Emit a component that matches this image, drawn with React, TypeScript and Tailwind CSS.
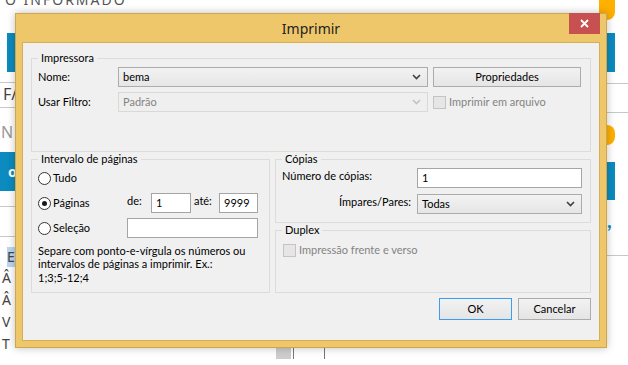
import { ReactNode } from "react";

const Chevron = ({ color = "#404040" }: { color?: string }) => (
  <svg width="9" height="6" viewBox="0 0 9 6" className="shrink-0">
    <path d="M1 1l3.5 3.5L8 1" fill="none" stroke={color} strokeWidth="1.6" />
  </svg>
);

const Group = ({
  title,
  className,
  children,
}: {
  title: string;
  className?: string;
  children: ReactNode;
}) => (
  <fieldset className={`border border-[#dcdcdc] ${className ?? ""}`}>
    <legend className="ml-[6px] px-[3px] leading-[14px] text-black">{title}</legend>
    {children}
  </fieldset>
);

const Radio = ({ checked, label }: { checked?: boolean; label: string }) => (
  <label className="flex items-center gap-[2px]">
    <span className="flex h-[13px] w-[13px] items-center justify-center rounded-full border border-[#333] bg-white">
      {checked && <span className="h-[5px] w-[5px] rounded-full bg-[#1a1a1a]" />}
    </span>
    <span>{label}</span>
  </label>
);

const TextBox = ({ value, className }: { value?: string; className?: string }) => (
  <div
    className={`flex h-[20px] items-center border border-[#a5a5a5] bg-white pl-[4px] ${className ?? ""}`}
  >
    {value}
  </div>
);

const Combo = ({
  value,
  disabled,
  className,
}: {
  value: string;
  disabled?: boolean;
  className?: string;
}) => (
  <div
    className={`flex h-[20px] items-center justify-between border pl-[4px] pr-[6px] ${
      disabled
        ? "border-[#d9d9d9] bg-[#efefef] text-[#838383]"
        : "border-[#acacac] bg-gradient-to-b from-[#f2f2f2] to-[#e6e6e6] text-black"
    } ${className ?? ""}`}
  >
    <span>{value}</span>
    <Chevron color={disabled ? "#c3c3c3" : "#404040"} />
  </div>
);

const Button = ({ label, focused, className }: { label: string; focused?: boolean; className?: string }) => (
  <button
    className={`flex items-center justify-center border bg-gradient-to-b from-[#f2f2f2] to-[#e5e5e5] text-black ${
      focused ? "border-[#3c9cf0]" : "border-[#acacac]"
    } ${className ?? ""}`}
  >
    {label}
  </button>
);

const Dialog = () => (
  <div className="absolute left-[15px] top-[13px] flex h-[335px] w-[592px] flex-col border border-[#d0a64c] bg-[#efc76b] shadow-[0_0_8px_rgba(0,0,0,0.25)]">
    <div className="relative flex h-[28px] shrink-0 items-center justify-center">
      <span className="font-['Noto_Sans',sans-serif] text-[14px] text-[#222]">Imprimir</span>
      <div className="absolute right-[6px] top-[-1px] flex h-[21px] w-[31px] items-center justify-center bg-[#c75050]">
        <svg width="9" height="9" viewBox="0 0 9 9">
          <path d="M1 1l7 7M8 1l-7 7" stroke="#fff" strokeWidth="1.8" />
        </svg>
      </div>
    </div>
    <div className="mx-[6px] mb-[6px] flex flex-1 flex-col border border-[#d6ae55] bg-[#f0f0f0] px-[8px] pt-[8px]">
      <Group title="Impressora" className="h-[101px]">
        <div className="grid grid-cols-[75px_310px_148px] items-center gap-x-[5px] gap-y-[5px] pl-[6px] pt-[2px]">
          <span>Nome:</span>
          <Combo value="bema" />
          <Button label="Propriedades" className="h-[20px]" />
          <span>Usar Filtro:</span>
          <Combo value="Padrão" disabled />
          <label className="flex items-center gap-[3px] text-[#838383]">
            <span className="h-[13px] w-[13px] border border-[#c4c4c4] bg-[#e6e6e6]" />
            Imprimir em arquivo
          </label>
        </div>
      </Group>
      <div className="flex gap-[5px]">
        <Group title="Intervalo de páginas" className="h-[141px] w-[239px]">
          <div className="flex flex-col pl-[6px] pt-[0.5px]">
            <div className="flex h-[24px] items-center">
              <Radio label="Tudo" />
            </div>
            <div className="flex h-[25px] items-center">
              <div className="w-[89px]">
                <Radio checked label="Páginas" />
              </div>
              <span className="mb-[4px] w-[24px]">de:</span>
              <TextBox value="1" className="w-[40px]" />
              <span className="mb-[4px] ml-[3px] w-[25px]">até:</span>
              <TextBox value="9999" className="w-[39px]" />
            </div>
            <div className="flex h-[25px] items-center">
              <div className="w-[89px]">
                <Radio label="Seleção" />
              </div>
              <TextBox className="w-[131px]" />
            </div>
            <p className="mt-[3px] leading-[13.5px]">
              Separe com ponto-e-vírgula os números ou intervalos de páginas a imprimir. Ex.:
              <br />
              1;3;5-12;4
            </p>
          </div>
        </Group>
        <div className="flex w-[316px] flex-col">
          <Group title="Cópias" className="h-[71px]">
            <div className="grid grid-cols-[129px_165px] items-center gap-x-[6px] gap-y-[5px] pl-[6px] pt-[1.5px]">
              <span className="mb-[5px]">Número de cópias:</span>
              <TextBox value="1" />
              <span className="mb-[3px] text-right">Ímpares/Pares:</span>
              <Combo value="Todas" />
            </div>
          </Group>
          <Group title="Duplex" className="flex-1">
            <label className="mt-[5px] flex items-center gap-[3px] pl-[7px] text-[#838383]">
              <span className="h-[13px] w-[13px] border border-[#c4c4c4] bg-[#e6e6e6]" />
              Impressão frente e verso
            </label>
          </Group>
        </div>
      </div>
      <div className="mt-[5px] flex justify-end gap-[6px]">
        <Button label="OK" focused className="h-[22px] w-[73px]" />
        <Button label="Cancelar" className="h-[22px] w-[73px]" />
      </div>
    </div>
  </div>
);

export default function App() {
  return (
    <div className="relative h-[365px] w-[628px] overflow-hidden bg-white font-['Lato',sans-serif] text-[11px] text-black">
      <div className="flex h-full">
        <div className="flex w-[15px] shrink-0 flex-col font-['Noto_Sans',sans-serif] text-[14px] leading-[16px] text-[#444]">
          <div className="mt-[-8px] h-[41px] whitespace-nowrap pl-[5px] tracking-[2px] text-[#555]">
            O INFORMADO
          </div>
          <div className="ml-[7px] h-[39px] bg-[#0b8bbf]" />
          <div className="mt-[10px] border-t border-[#c8c8c8]" />
          <div className="mt-[3px] h-[18px] pl-[3px] text-[16px]">F/</div>
          <div className="mt-[3px] border-t border-[#c8c8c8]" />
          <div className="mt-[16px] h-[20px] pl-[1px] text-[16px] text-[#999]">N</div>
          <div className="mt-[8px] flex h-[39px] items-center bg-[#0b8bbf] pl-[8px] font-bold text-white">o</div>
          <div className="mt-[15px] border-t border-[#c8c8c8]" />
          <div className="mt-[29px] border-t border-[#c8c8c8]" />
          <div className="ml-[7px] mt-[10px] h-[20px] bg-[#b9d7f5] leading-[20px]">E</div>
          <div className="h-[22px] pl-[2px] leading-[22px]">Â</div>
          <div className="h-[22px] pl-[2px] leading-[22px]">Â</div>
          <div className="h-[22px] pl-[2px] leading-[22px]">V</div>
          <div className="h-[22px] pl-[2px] leading-[22px]">T</div>
        </div>
        <div className="flex flex-1 items-end">
          <div className="mb-[6px] ml-[261px] flex h-[12px] items-stretch">
            <div className="w-[15px] bg-[#cdcdcd]" />
            <div className="ml-[2px] w-px bg-[#777]" />
            <div className="ml-[30px] w-px bg-[#777]" />
          </div>
        </div>
        <div className="flex w-[21px] shrink-0 flex-col">
          <div className="ml-[-8px] h-[20px] w-[16px] rounded-b-full bg-[#ffb000]" />
          <div className="mt-[13px] h-[39px] w-[8px] bg-[#0b8bbf]" />
          <div className="mt-[11px] border-t border-[#c8c8c8]" />
          <div className="mt-[28px] border-t border-[#c8c8c8]" />
          <div className="ml-[-8px] mt-[12px] h-[20px] w-[16px] rounded-full bg-[#ffb000]" />
          <div className="mt-[17px] h-[38px] w-[8px] bg-[#0b8bbf]" />
          <div className="mt-[8px] text-[20px] font-bold leading-[24px] text-[#0b8bbf]">,</div>
          <div className="mt-[23px] border-t border-[#c8c8c8]" />
        </div>
      </div>
      <Dialog />
    </div>
  );
}
